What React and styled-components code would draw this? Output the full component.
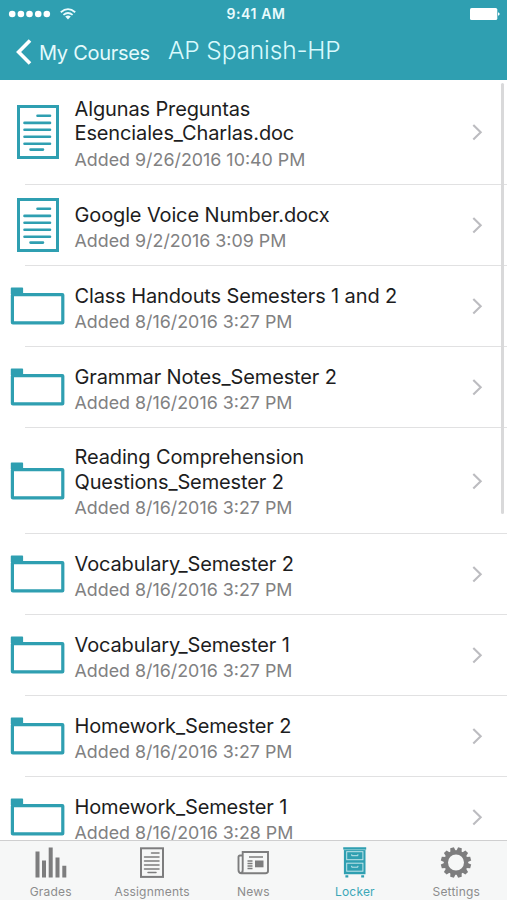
import styled, { createGlobalStyle } from "styled-components";

const teal = "#2f9fb1";

const files = [
  { kind: "doc", lines: ["Algunas Preguntas", "Esenciales_Charlas.doc"], added: "9/26/2016 10:40 PM" },
  { kind: "doc", lines: ["Google Voice Number.docx"], added: "9/2/2016 3:09 PM" },
  { kind: "folder", lines: ["Class Handouts Semesters 1 and 2"], added: "8/16/2016 3:27 PM" },
  { kind: "folder", lines: ["Grammar Notes_Semester 2"], added: "8/16/2016 3:27 PM" },
  { kind: "folder", lines: ["Reading Comprehension", "Questions_Semester 2"], added: "8/16/2016 3:27 PM" },
  { kind: "folder", lines: ["Vocabulary_Semester 2"], added: "8/16/2016 3:27 PM" },
  { kind: "folder", lines: ["Vocabulary_Semester 1"], added: "8/16/2016 3:27 PM" },
  { kind: "folder", lines: ["Homework_Semester 2"], added: "8/16/2016 3:27 PM" },
  { kind: "folder", lines: ["Homework_Semester 1"], added: "8/16/2016 3:28 PM" },
];

const GlobalStyle = createGlobalStyle`
  * {
    box-sizing: border-box;
  }

  body {
    margin: 0;
    overflow: hidden;
    font-family: Inter, "Liberation Sans", sans-serif;
    background: #fff;
  }

  svg {
    display: block;
  }
`;

const Screen = styled.div`
  position: relative;
  display: flex;
  flex-direction: column;
  height: 900px;
  width: 507px;
  overflow: hidden;
`;

const Header = styled.header`
  flex: none;
  height: 80px;
  color: #fff;
  background: ${teal};
`;

const StatusBar = styled.div`
  display: grid;
  grid-template-columns: 1fr auto 1fr;
  align-items: center;
  height: 27px;
  padding: 0 7px 0 8px;
`;

const Signal = styled.div`
  display: flex;
  align-items: center;
  gap: 9px;
`;

const Clock = styled.div`
  padding: 1px 0 0 4px;
  font-size: 14px;
  font-weight: 600;
  letter-spacing: 0.6px;
  line-height: 26px;
  color: #e9fbfd;
`;

const Battery = styled.div`
  justify-self: end;
`;

const NavBar = styled.nav`
  display: flex;
  align-items: center;
  height: 50px;
  padding-left: 16px;
`;

const BackLabel = styled.span`
  width: 129px;
  margin: 1px 0 0 7px;
  font-size: 20px;
  letter-spacing: -0.3px;
  line-height: 50px;
  color: #e4fafc;
`;

const Title = styled.h1`
  margin: -4px 0 0;
  font-size: 24.5px;
  font-weight: 300;
  letter-spacing: -0.15px;
  line-height: 50px;
  color: #d9fafd;
`;

const List = styled.main`
  flex: 1;
  min-height: 0;
  overflow: hidden;
`;

const Row = styled.div`
  position: relative;
  display: flex;
  align-items: center;
  height: ${({ $height }) => $height}px;
  padding: 0 24px 1px 10px;

  &::after {
    content: "";
    position: absolute;
    left: 25px;
    right: 0;
    bottom: 0;
    height: 1px;
    background: #e1e1e2;
  }
`;

const IconCell = styled.div`
  display: flex;
  flex: none;
  justify-content: center;
  width: 55px;
  margin-right: 9.5px;
`;

const RowText = styled.div`
  flex: 1;
  padding-top: ${({ $tall }) => ($tall ? 5 : 7)}px;
  white-space: nowrap;
`;

const FileName = styled.div`
  font-size: 20px;
  letter-spacing: -0.13px;
  line-height: 24.5px;
  color: #1d1d1e;
`;

const Added = styled.div`
  font-size: 17.85px;
  letter-spacing: 0;
  line-height: 27px;
  color: #818182;
`;

const ScrollBar = styled.div`
  position: absolute;
  top: 83px;
  right: 3px;
  width: 3px;
  height: 431px;
  border-radius: 2px;
  background: #d9d9da;
`;

const TabBar = styled.footer`
  display: grid;
  flex: none;
  grid-template-columns: repeat(5, 1fr);
  height: 60px;
  border-top: 1px solid #cfcfd0;
  background: #f6f7f7;
`;

const Tab = styled.div`
  display: flex;
  flex-direction: column;
  align-items: center;
  padding-top: 6px;
  color: ${({ $active }) => ($active ? teal : "#7d7d7e")};
`;

const TabLabel = styled.span`
  margin-top: 5px;
  font-size: 12px;
  letter-spacing: 0.2px;
  line-height: 16px;
  color: ${({ $active }) => ($active ? "#3ca7b7" : "#8c8c8d")};
`;

const DocIcon = () => (
  <svg width="42" height="54" viewBox="0 0 42 54" fill="none" stroke={teal}>
    <rect x="1.5" y="1.5" width="39" height="51" strokeWidth="3" />
    <path
      d="M20.5 10.7H33M7.5 17.9H33M7.5 24.7H33M7.5 31.8H33M7.5 38.7H33M13.5 44.6H26"
      strokeWidth="2.6"
      strokeLinecap="round"
    />
  </svg>
);

const FolderIcon = () => (
  <svg width="55" height="38" viewBox="0 0 55 38">
    <path d="M.8 9V1.2Q.8.4 1.6.4H12.3Q13.1.4 13.1 1.2V7H.8z" fill={teal} />
    <rect x="2.4" y="7.6" width="50.4" height="28.3" rx=".5" fill="none" stroke={teal} strokeWidth="3.2" />
  </svg>
);

const Chevron = () => (
  <svg width="11" height="18" viewBox="0 0 11 18" fill="none" stroke="#bcbcc0" strokeWidth="2.1">
    <path d="M1.3 2L8.7 9.2L1.3 16.4" />
  </svg>
);

const BackIcon = () => (
  <svg width="16" height="26" viewBox="0 0 16 26" fill="none" stroke="#fff" strokeWidth="3.6">
    <path d="M14 1.5L2.6 13L14 24.5" />
  </svg>
);

const SignalDots = () => (
  <svg width="43" height="8" viewBox="0 0 43 8" fill="#fff">
    {[4.2, 12.9, 21.5, 30.2, 38.8].map((x) => (
      <circle key={x} cx={x} cy="4" r="3.3" />
    ))}
  </svg>
);

const WifiIcon = () => (
  <svg width="16" height="12" viewBox="0 0 16 12" fill="none" stroke="#e9fbfd" strokeWidth="1.8">
    <path d="M.8 4.2Q8-2 15.2 4.2M3.4 6.9Q8 3 12.6 6.9" />
    <path d="M5.2 8.6Q8 6.5 10.8 8.6L8 11.5z" fill="#e9fbfd" stroke="none" />
  </svg>
);

const BatteryIcon = () => (
  <svg width="30" height="12" viewBox="0 0 30 12" fill="#fff">
    <rect width="27.3" height="12" rx="1.6" />
    <path d="M28 4.2Q29.7 4.7 29.7 6T28 7.8z" />
  </svg>
);

const GradesIcon = () => (
  <svg width="32" height="32" viewBox="0 0 32 32" fill="currentColor">
    <path d="M.5 4.5h4v26h-4zM7 13.5h4v17H7zM13.7.5h4v30h-4zM20.5 10.5h4v20h-4zM27.3 18.8h4v11.7h-4z" />
  </svg>
);

const AssignmentsIcon = () => (
  <svg width="26" height="32" viewBox="0 0 26 32" fill="none" stroke="currentColor">
    <rect x="2" y="1.3" width="22" height="28.6" strokeWidth="2" />
    <path d="M12.5 6.1H20M5.5 10.1H20M5.5 14H20M5.5 17.9H20M5.5 21.9H20M9 25.5H17" strokeWidth="1.5" strokeLinecap="round" />
  </svg>
);

const NewsIcon = () => (
  <svg width="32" height="32" viewBox="0 0 32 32" fill="none" stroke="currentColor" strokeWidth="1.9">
    <path d="M5.7 8.5H3Q1.5 8.5 1.5 10V23Q1.5 26.2 4.5 26.2H28.5Q31 26.2 31 24V5H5.7V23Q5.7 26 3.8 26" />
    <path d="M12 10H26M10.5 14H15.5M10.5 16.5H15.5M10.5 19H15.5M10.5 21.5H15.5" strokeWidth="1.3" />
    <rect x="18" y="13.5" width="8.5" height="6.8" fill="currentColor" stroke="none" />
  </svg>
);

const LockerIcon = () => (
  <svg width="24" height="32" viewBox="0 0 24 32" fill="currentColor">
    <path d="M.2.3h23v2.2H.2zM.9 2.5h21.6v24.7H.9zM2.4 28.3h2.9v2.3H2.4zM18.2 28.3h2.9v2.3h-2.9z" />
    <g fill="none" stroke="#c2e5ea" strokeWidth="1">
      <path d="M1.1 2.7H22.3" strokeWidth=".6" />
      <rect x="3.7" y="4.7" width="16.2" height="8" />
      <rect x="3.7" y="16.2" width="16.2" height="8" />
      <path d="M8.7 7.3V8.7H14.9V7.3M8.7 18.8V20.2H14.9V18.8" />
    </g>
  </svg>
);

const SettingsIcon = () => (
  <svg width="32" height="32" viewBox="-16 -15.5 32 32" fill="currentColor">
    {[15, 45, 75, 105, 135, 165, 195, 225, 255, 285, 315, 345].map((angle) => (
      <path key={angle} d="M-2.8-11L-1.9-15.2H1.9L2.8-11z" transform={`rotate(${angle})`} />
    ))}
    <circle r="10.1" fill="none" stroke="currentColor" strokeWidth="4.2" />
  </svg>
);

const tabs = [
  { label: "Grades", Icon: GradesIcon },
  { label: "Assignments", Icon: AssignmentsIcon },
  { label: "News", Icon: NewsIcon },
  { label: "Locker", Icon: LockerIcon, active: true },
  { label: "Settings", Icon: SettingsIcon },
];

const FileRow = ({ file, first }) => {
  const tall = file.lines.length > 1;
  const height = tall ? (first ? 105 : 106) : 81;

  return (
    <Row $height={height}>
      <IconCell>{file.kind === "doc" ? <DocIcon /> : <FolderIcon />}</IconCell>
      <RowText $tall={tall}>
        {file.lines.map((line) => (
          <FileName key={line}>{line}</FileName>
        ))}
        <Added>Added {file.added}</Added>
      </RowText>
      <Chevron />
    </Row>
  );
};

const App = () => {
  return (
    <>
      <GlobalStyle />
      <Screen>
        <Header>
          <StatusBar>
            <Signal>
              <SignalDots />
              <WifiIcon />
            </Signal>
            <Clock>9:41 AM</Clock>
            <Battery>
              <BatteryIcon />
            </Battery>
          </StatusBar>
          <NavBar>
            <BackIcon />
            <BackLabel>My Courses</BackLabel>
            <Title>AP Spanish-HP</Title>
          </NavBar>
        </Header>
        <List>
          {files.map((file, index) => (
            <FileRow key={file.lines[0]} file={file} first={index === 0} />
          ))}
        </List>
        <ScrollBar />
        <TabBar>
          {tabs.map(({ label, Icon, active }) => (
            <Tab key={label} $active={active}>
              <Icon />
              <TabLabel $active={active}>{label}</TabLabel>
            </Tab>
          ))}
        </TabBar>
      </Screen>
    </>
  );
};

export default App;
